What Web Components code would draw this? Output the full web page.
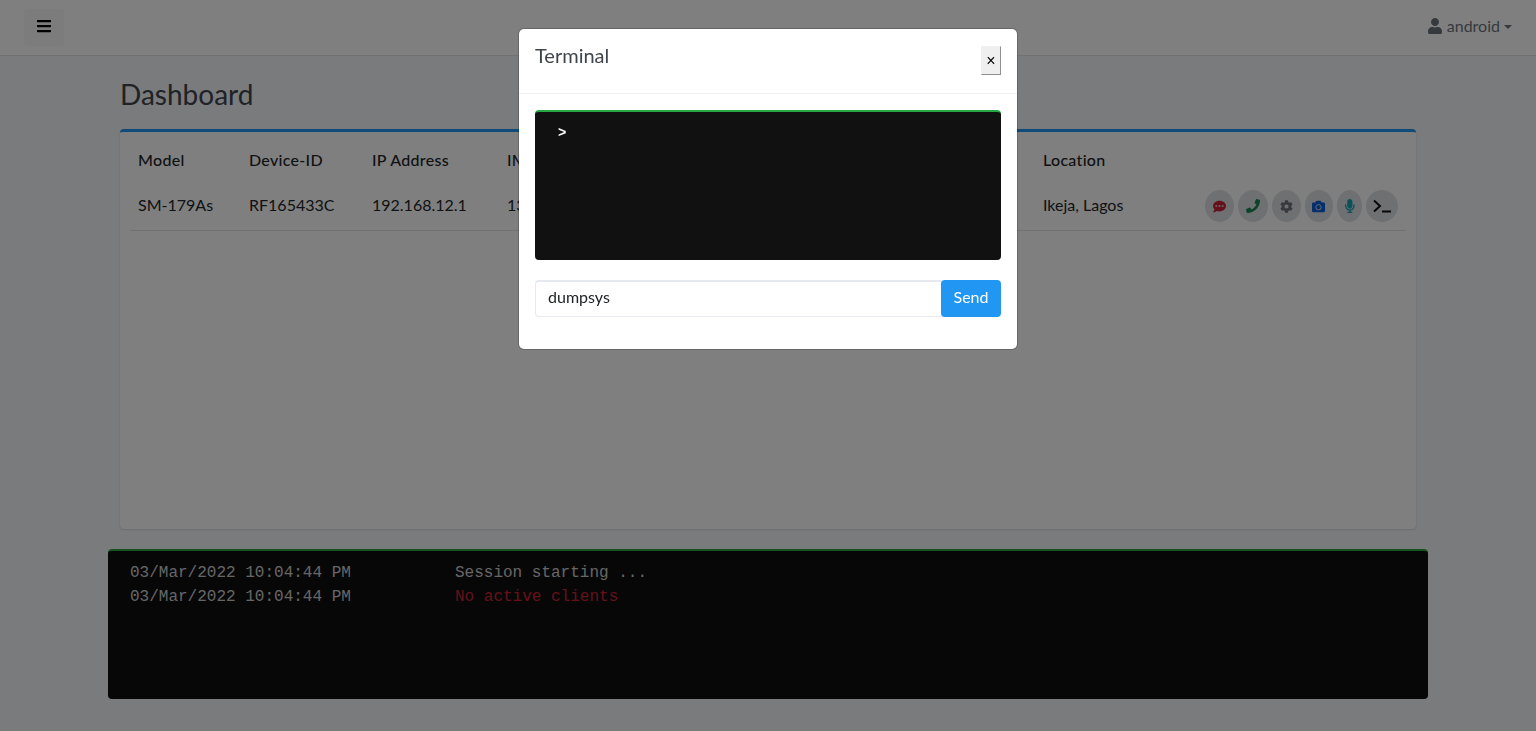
<!DOCTYPE html>
<html lang="en">
<head>
<meta charset="utf-8">
<title>Dashboard</title>
<style>
  html, body { margin: 0; height: 100%; }
  body { background: #f4f6f9; font-family: "Lato", "Liberation Sans", sans-serif; font-size: 16px; overflow: hidden; }
</style>
</head>
<body>
<top-bar user="android"></top-bar>
<main-page heading="Dashboard">
  <device-table></device-table>
  <log-console>
    <log-line time="03/Mar/2022 10:04:44 PM">Session starting ...</log-line>
    <log-line time="03/Mar/2022 10:04:44 PM" level="error">No active clients</log-line>
  </log-console>
</main-page>
<terminal-modal heading="Terminal" command="dumpsys"></terminal-modal>

<script>
const ICONS = {
  bars: ["0 0 448 512", "M16 132h416c8.837 0 16-7.163 16-16V76c0-8.837-7.163-16-16-16H16C7.163 60 0 67.163 0 76v40c0 8.837 7.163 16 16 16zm0 160h416c8.837 0 16-7.163 16-16v-40c0-8.837-7.163-16-16-16H16c-8.837 0-16 7.163-16 16v40c0 8.837 7.163 16 16 16zm0 160h416c8.837 0 16-7.163 16-16v-40c0-8.837-7.163-16-16-16H16c-8.837 0-16 7.163-16 16v40c0 8.837 7.163 16 16 16z"],
  user: ["0 0 448 512", "M224 256c70.7 0 128-57.3 128-128S294.7 0 224 0 96 57.3 96 128s57.3 128 128 128zm89.6 32h-16.7c-22.2 10.2-46.9 16-72.9 16s-50.6-5.8-72.9-16h-16.7C60.2 288 0 348.2 0 422.4V464c0 26.5 21.5 48 48 48h352c26.5 0 48-21.5 48-48v-41.6c0-74.2-60.2-134.4-134.4-134.4z"],
  sms: ["0 0 512 512", "M256 32C114.6 32 0 125.1 0 240c0 49.6 21.4 95 57 130.7C44.5 421.1 2.7 466 2.2 466.5c-2.2 2.3-2.8 5.7-1.5 8.7 1.3 3 4.1 4.8 7.3 4.8 66.3 0 116-31.8 140.6-51.4 32.7 12.3 69 19.4 107.4 19.4 141.4 0 256-93.1 256-208S397.4 32 256 32zM96 205h70v30h-70zM96 250h70v30H96zM221 205h70v75h-30v-45h-10v45h-30zM346 205h70v30h-70zM346 250h70v30h-70z"],
  phone: ["0 0 512 512", "M493.4 24.6l-104-24c-11.3-2.6-22.9 3.3-27.5 13.9l-48 112c-4.2 9.8-1.4 21.3 6.9 28l60.6 49.6c-36 76.7-98.9 140.5-177.2 177.2l-49.6-60.6c-6.8-8.3-18.2-11.1-28-6.9l-112 48C3.9 366.5-2 378.1.6 389.4l24 104C27.1 504.2 36.7 512 48 512c256.1 0 464-207.5 464-464 0-11.2-7.7-20.9-18.6-23.4z"],
  cog: ["0 0 512 512", "M487.4 315.7l-42.6-24.6c4.3-23.2 4.3-47 0-70.2l42.6-24.6c4.9-2.8 7.1-8.6 5.5-14-11.1-35.6-30-67.8-54.7-94.6-3.8-4.1-10-5.1-14.8-2.3L380.8 110c-17.9-15.4-38.5-27.3-60.8-35.1V25.8c0-5.6-3.9-10.5-9.4-11.7-36.7-8.2-74.3-7.8-109.2 0-5.5 1.2-9.4 6.1-9.4 11.7V75c-22.2 7.9-42.8 19.8-60.8 35.1L88.7 85.5c-4.9-2.8-11-1.9-14.8 2.3-24.7 26.7-43.6 58.9-54.7 94.6-1.7 5.4.6 11.2 5.5 14L67.3 221c-4.3 23.2-4.3 47 0 70.2l-42.6 24.6c-4.9 2.8-7.1 8.6-5.5 14 11.1 35.6 30 67.8 54.7 94.6 3.8 4.1 10 5.1 14.8 2.3l42.6-24.6c17.9 15.4 38.5 27.3 60.8 35.1v49.2c0 5.6 3.9 10.5 9.4 11.7 36.7 8.2 74.3 7.8 109.2 0 5.5-1.2 9.4-6.1 9.4-11.7v-49.2c22.2-7.9 42.8-19.8 60.8-35.1l42.6 24.6c4.9 2.8 11 1.9 14.8-2.3 24.7-26.7 43.6-58.9 54.7-94.6 1.5-5.5-.7-11.3-5.6-14.1zM256 336c-44.1 0-80-35.9-80-80s35.9-80 80-80 80 35.9 80 80-35.9 80-80 80z"],
  camera: ["0 0 512 512", "M512 144v288c0 26.5-21.5 48-48 48H48c-26.5 0-48-21.5-48-48V144c0-26.5 21.5-48 48-48h88l12.3-32.9c7-18.7 24.9-31.1 44.9-31.1h125.5c20 0 37.9 12.4 44.9 31.1L376 96h88c26.5 0 48 21.5 48 48zM376 288c0-66.2-53.8-120-120-120s-120 53.8-120 120 53.8 120 120 120 120-53.8 120-120zm-32 0c0 48.5-39.5 88-88 88s-88-39.5-88-88 39.5-88 88-88 88 39.5 88 88z"],
  mic: ["0 0 352 512", "M176 352c53.02 0 96-42.98 96-96V96c0-53.02-42.98-96-96-96S80 42.98 80 96v160c0 53.02 42.98 96 96 96zm160-160h-16c-8.84 0-16 7.16-16 16v48c0 74.8-64.5 134.82-140.79 127.38C96.71 376.89 48 317.11 48 250.3V208c0-8.84-7.16-16-16-16H16c-8.84 0-16 7.16-16 16v40.16c0 89.64 63.97 169.55 152 181.69V464H96c-8.84 0-16 7.16-16 16v16c0 8.84 7.16 16 16 16h160c8.84 0 16-7.16 16-16v-16c0-8.84-7.16-16-16-16h-56v-33.77C285.71 418.47 352 344.9 352 256v-48c0-8.84-7.16-16-16-16z"],
};

const svgIcon = (name, height) => {
  // the prompt glyph in the reference is thinner than the solid one, so it is stroked
  if (name === "terminal") {
    return `<svg viewBox="0 0 18 14" width="18" height="${height}" fill="none" stroke="currentColor" stroke-width="2" aria-hidden="true"><path d="M1 1.5l6 5.5-6 5.5M9 12.5h9"/></svg>`;
  }
  const [box, d] = ICONS[name];
  return `<svg viewBox="${box}" height="${height}" fill="currentColor" fill-rule="evenodd" aria-hidden="true"><path d="${d}"/></svg>`;
};

class TopBar extends HTMLElement {
  connectedCallback() {
    const root = this.attachShadow({ mode: "open" });
    root.innerHTML = `<style>
      :host { display: flex; align-items: center; justify-content: space-between; box-sizing: border-box;
              height: 56px; padding: 0 24px; background: #fff; border-bottom: 1px solid #dee2e6; }
      button { display: flex; align-items: center; justify-content: center; width: 40px; height: 37px;
               border: 0; border-radius: 4px; background: #f8f9fa; color: #000; padding: 0 0 3px; }
      .user { display: flex; align-items: center; gap: 4px; color: #6c757d; font: 16px "Lato", sans-serif; margin-top: -4px; }
      .user svg { display: block; margin-left: -1px; margin-right: 1px; }
      .caret { width: 0; height: 0; border: 4.5px solid transparent; border-top-color: currentColor; border-bottom: 0; margin-top: 2px; }
    </style>
    <button aria-label="Menu">${svgIcon("bars", 16)}</button>
    <div class="user">${svgIcon("user", 16)}<span>${this.getAttribute("user")}</span><i class="caret"></i></div>`;
  }
}

class MainPage extends HTMLElement {
  connectedCallback() {
    const root = this.attachShadow({ mode: "open" });
    root.innerHTML = `<style>
      :host { display: block; width: 1320px; margin: 0 auto; }
      h1 { margin: 0; padding: 19px 12px 0; height: 54px; font: 400 28px/38px "Lato", sans-serif; color: #3f454c; }
    </style>
    <h1>${this.getAttribute("heading")}</h1>
    <slot></slot>`;
  }
}

class DeviceTable extends HTMLElement {
  connectedCallback() {
    const root = this.attachShadow({ mode: "open" });
    const actions = [
      ["sms", "#c82333", 13, 29],
      ["phone", "#198754", 14, 30],
      ["cog", "#6c757d", 13, 29],
      ["camera", "#0b5ed7", 13, 29],
      ["mic", "#17a2b8", 14, 25],
      ["terminal", "#111", 14, 32],
    ];
    const buttons = actions.map(([name, color, size, width]) =>
      `<button style="color:${color};width:${width}px" aria-label="${name}">${svgIcon(name, size)}</button>`).join("");
    root.innerHTML = `<style>
      :host { display: block; box-sizing: border-box; height: 400px; margin: 0 12px 20px; padding: 10px;
              background: #fff; border-top: 3px solid #2196f3; border-radius: 4px;
              box-shadow: 0 0 1px rgba(0,0,0,.125), 0 1px 2px rgba(0,0,0,.1); }
      table { width: 100%; table-layout: fixed; border-collapse: collapse; color: #212529; font: 16px/24px "Lato", sans-serif; }
      th { text-align: left; font-weight: 500; letter-spacing: .3px; padding: 6px 8px; }
      td { padding: 15px 8px 13px; border-bottom: 1px solid #dee2e6; }
      td.actions { padding: 12px 8px 8px; }
      .group { display: flex; gap: 4px; justify-content: flex-end; }
      button { display: flex; align-items: center; justify-content: center; height: 32px; padding: 0; border: 0;
               border-radius: 50%; background: #dfe1e3; }
      button svg { display: block; }
    </style>
    <table>
      <colgroup><col style="width:111px"><col style="width:123px"><col style="width:135px"><col style="width:536px"><col style="width:162px"><col></colgroup>
      <thead><tr><th>Model</th><th>Device-ID</th><th>IP Address</th><th>IMEI</th><th>Location</th><th></th></tr></thead>
      <tbody><tr><td>SM-179As</td><td>RF165433C</td><td>192.168.12.1</td><td>135790246811</td><td>Ikeja, Lagos</td>
        <td class="actions"><div class="group">${buttons}</div></td></tr></tbody>
    </table>`;
  }
}

class LogConsole extends HTMLElement {
  connectedCallback() {
    const root = this.attachShadow({ mode: "open" });
    root.innerHTML = `<style>
      :host { display: block; box-sizing: border-box; height: 150px; padding: 10px 22px; background: #0f0f0f;
              border-top: 2px solid #28a745; border-radius: 4px; }
    </style><slot></slot>`;
  }
}

class LogLine extends HTMLElement {
  connectedCallback() {
    const root = this.attachShadow({ mode: "open" });
    const error = this.getAttribute("level") === "error";
    root.innerHTML = `<style>
      :host { display: grid; grid-template-columns: 325px 1fr; font: 16px/24px "Liberation Mono", monospace; color: #ccc; }
      .msg { color: ${error ? "#c82333" : "#ccc"}; }
    </style>
    <span>${this.getAttribute("time")}</span><span class="msg"><slot></slot></span>`;
  }
}

class TerminalModal extends HTMLElement {
  connectedCallback() {
    const root = this.attachShadow({ mode: "open" });
    root.innerHTML = `<style>
      :host { position: fixed; inset: 0; display: flex; justify-content: center; align-items: flex-start;
              background: rgba(0,0,0,.5); font: 16px/24px "Lato", sans-serif; }
      .dialog { box-sizing: border-box; width: 498px; height: 320px; margin-top: 29px; background: #fff; border-radius: 5px;
                box-shadow: 0 0 0 1px rgba(0,0,0,.2); }
      header { display: flex; justify-content: space-between; align-items: flex-start; height: 30px; padding: 17px 16px;
               border-bottom: 1px solid #f1f2f3; }
      h2 { margin: -1px 0 0; font: 400 20px/20px "Lato", sans-serif; color: #3f454c; }
      .close { width: 20px; height: 29px; padding: 0; background: #efefef; color: #000; font: 400 16px/26px "Liberation Sans", sans-serif;
               border: 1px solid #efefef; border-right-color: #8f8f8f; border-bottom-color: #8f8f8f; }
      .body { padding: 16px; }
      .screen { box-sizing: border-box; height: 150px; padding: 7px 23px; background: #111; color: #fff;
                border-top: 2px solid #28a745; border-radius: 4px; font: 700 14px/28px "Liberation Mono", monospace; }
      form { display: flex; margin: 20px 0 0; }
      .field { flex: 1; box-sizing: border-box; height: 37px; padding: 3px 12px; border: 1px solid #e6e9ed; border-top-width: 2px; border-radius: 4px;
               color: #212529; outline: none; }
      .send { width: 60px; height: 37px; margin-left: -4px; padding: 0 0 3px; border: 0; border-radius: 4px; background: #2196f3; color: #fff;
              font: inherit; position: relative; }
    </style>
    <div class="dialog">
      <header><h2>${this.getAttribute("heading")}</h2><button class="close" aria-label="Close">×</button></header>
      <div class="body">
        <div class="screen">&gt;</div>
        <form><div class="field" role="textbox" contenteditable="true">${this.getAttribute("command")}</div><button class="send" type="button">Send</button></form>
      </div>
    </div>`;
  }
}

customElements.define("top-bar", TopBar);
customElements.define("main-page", MainPage);
customElements.define("device-table", DeviceTable);
customElements.define("log-console", LogConsole);
customElements.define("log-line", LogLine);
customElements.define("terminal-modal", TerminalModal);
</script>
</body>
</html>
